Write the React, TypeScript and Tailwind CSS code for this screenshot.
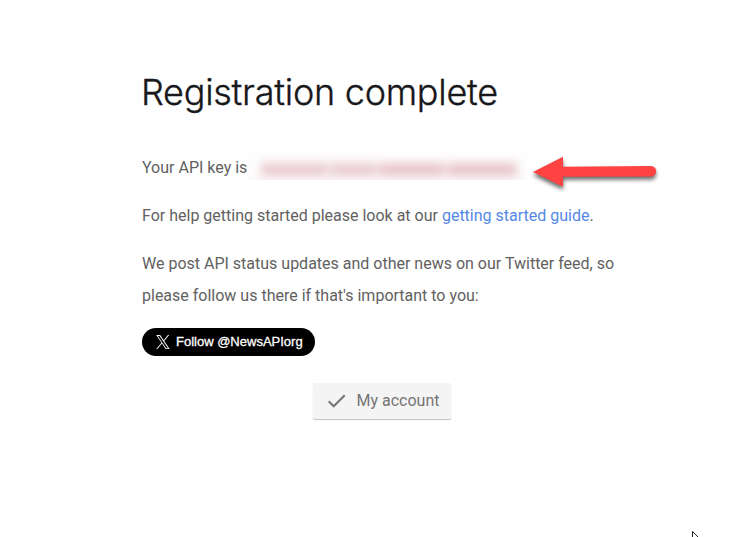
import React from "react";

const smudges = [
  { width: 66, opacity: 0.55 },
  { width: 45, opacity: 0.55 },
  { width: 66, opacity: 0.65 },
  { width: 69, opacity: 0.65 },
];

function RedactedKey() {
  return (
    <span className="flex h-[35px] w-[280px] items-end overflow-hidden bg-linear-to-b from-white to-[#fcfafa] pl-[13px]">
      <span className="flex h-[20px] w-[258px] items-start gap-[4px] bg-[#f8eef0] px-[2px] blur-[4px]">
        {smudges.map((s, i) => (
          <span key={i} className="mt-[4px] h-[11px] bg-[#deb0b6]" style={{ width: s.width, opacity: s.opacity }} />
        ))}
      </span>
    </span>
  );
}

function Arrow() {
  return (
    <svg className="absolute left-[520px] top-[145px]" width="150" height="55" viewBox="0 0 150 55">
      <path
        d="M13 27 L43 11.7 V21.7 L131 21 A5.2 5.2 0 0 1 131 31.4 L43 31.7 V41.7 Z"
        fill="#ff4343"
        className="drop-shadow-[0px_3px_2px_rgba(0,0,0,0.6)]"
      />
    </svg>
  );
}

export default function App() {
  return (
    <main className="relative h-[537px] w-[741px] overflow-hidden bg-white pl-[142px] pt-[68px] font-['Roboto',sans-serif] text-base leading-8 text-[#616161]">
      <h1 className="-ml-px h-[84px] whitespace-nowrap font-['Inter',sans-serif] text-[36px] font-light leading-[48px] tracking-[-0.26px] text-[#18181b] [-webkit-text-stroke:0.35px_#18181b]">
        Registration complete
      </h1>
      <p className="flex h-8 items-end whitespace-nowrap">
        <span className="w-[105px] shrink-0">Your API key is</span>
        <span className="mb-[4px] shrink-0"><RedactedKey /></span>
      </p>
      <p className="mt-4">
        For help getting started please look at our{" "}
        <a className="text-[#5588e6]">getting started guide</a>.
      </p>
      <p className="mt-4 whitespace-nowrap">
        We post API status updates and other news on our Twitter feed, so
        <br />
        please follow us there if that's important to you:
      </p>
      <a className="mt-[16px] flex h-[28px] w-[173px] items-center rounded-full bg-black pl-[14px] text-white">
        <svg className="mr-[6px] shrink-0" width="14" height="14" viewBox="0 0 24 24" fill="white">
          <path d="M14.1 10.3 22.6 0h-2.1l-7.4 8.9L7.2 0H.4l9 13.3L.4 24h2l7.8-9.3 6.3 9.3h6.8L14.1 10.3Zm-2.8 3.3-.9-1.3L3.2 1.6h3l5.8 8.6.9 1.3 7.6 11h-3l-6.2-8.9Z" />
        </svg>
        <span className="whitespace-nowrap font-['Liberation_Sans',Arial,sans-serif] text-[13px] font-medium leading-5 [-webkit-text-stroke:0.3px_white]">Follow @NewsAPIorg</span>
      </a>
      <button className="ml-[171px] mt-[27px] flex h-[36px] w-[138px] items-center rounded-[2px] bg-[#f4f4f4] pl-[15px] text-[#757575] shadow-[0_1px_1px_rgba(0,0,0,0.25)]">
        <svg className="mr-[10.5px] shrink-0" width="18" height="14" viewBox="0 0 18 14" fill="none" stroke="#757575" strokeWidth="2">
          <path d="m.7 7.3 5 5L16.7 1.3" />
        </svg>
        <span className="whitespace-nowrap leading-9">My account</span>
      </button>
      <Arrow />
      <svg className="absolute left-[691px] top-[530px]" width="10" height="7" viewBox="0 0 10 7">
        <path d="M1.5 7V1.5L7 7" fill="white" stroke="#222" />
      </svg>
    </main>
  );
}
